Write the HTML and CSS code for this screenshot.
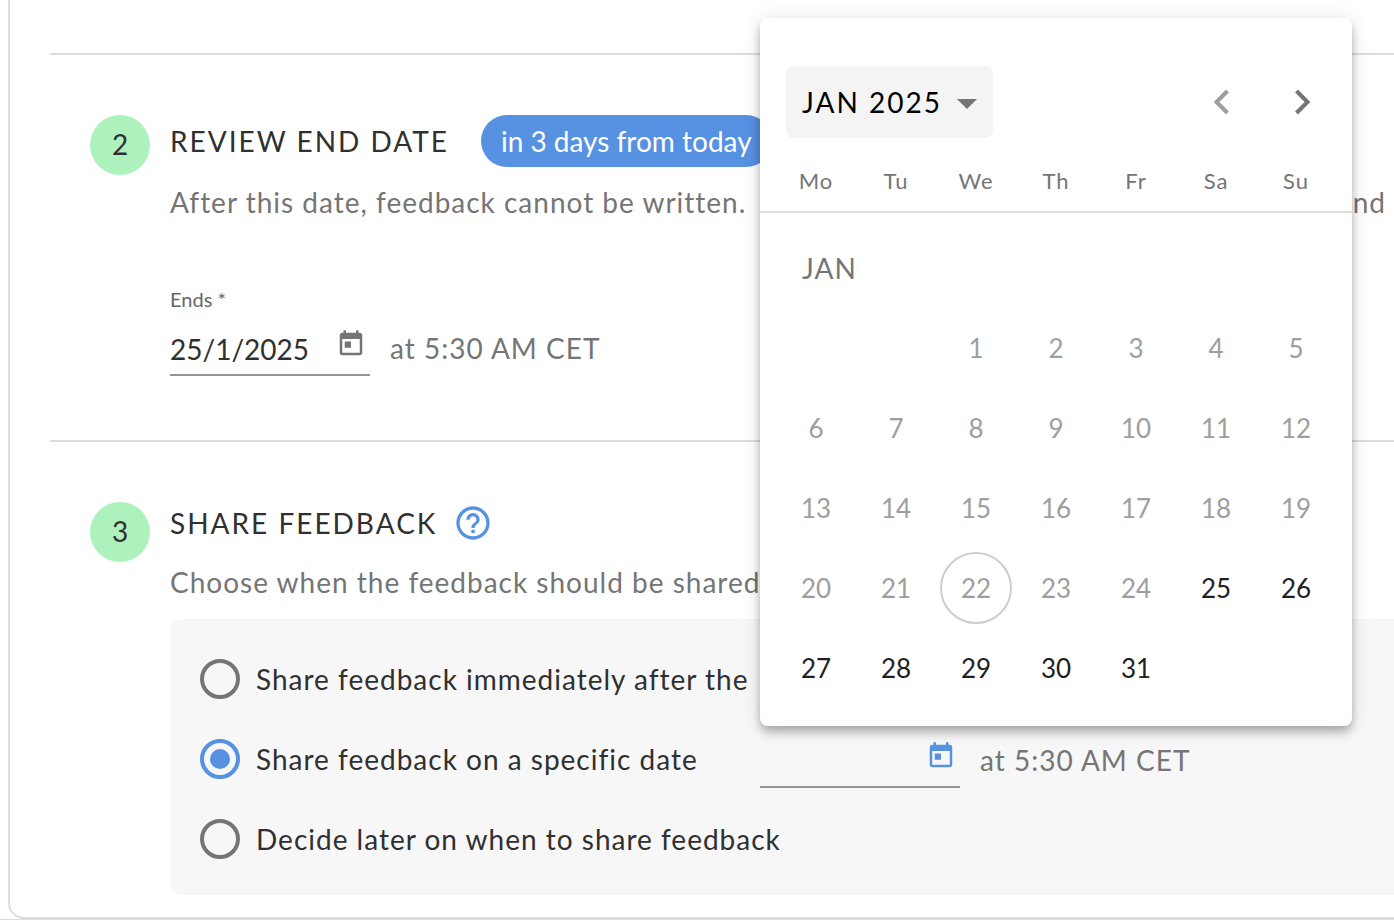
FILE: index.html
```html
<!DOCTYPE html>
<html lang="en">
<head>
    <meta charset="UTF-8">
    <meta name="viewport" content="width=device-width, initial-scale=1.0">
    <title>Review settings</title>
    <link rel="stylesheet" href="styles.css">
</head>
<body>
    <main class="page">
        <div class="card">
            <div class="step-previous"></div>

            <section class="step">
                <div class="step-number">2</div>
                <div class="step-content">
                    <div class="step-header">
                        <h2>REVIEW END DATE</h2>
                        <span class="chip">in 3 days from today</span>
                    </div>
                    <p class="description">
                        <span>After this date, feedback cannot be written.</span>
                        <span>nd</span>
                    </p>
                    <label class="field-label" for="end-date">Ends *</label>
                    <div class="date-row">
                        <div class="date-field">
                            <input type="text" id="end-date" value="25/1/2025">
                            <button class="icon-btn" aria-label="Open calendar">
                                <svg width="30" height="30" viewBox="0 0 24 24" fill="currentColor"><path d="M19 3h-1V1h-2v2H8V1H6v2H5c-1.11 0-1.99.9-1.99 2L3 19c0 1.1.89 2 2 2h14c1.1 0 2-.9 2-2V5c0-1.1-.9-2-2-2zm0 16H5V8h14v11zM7 10h5v5H7z"/></svg>
                            </button>
                        </div>
                        <span class="time">at 5:30 AM CET</span>
                    </div>
                </div>
            </section>

            <section class="step">
                <div class="step-number">3</div>
                <div class="step-content">
                    <div class="step-header share-header">
                        <h2>SHARE FEEDBACK</h2>
                        <button class="help-btn" aria-label="Help">
                            <svg width="40" height="40" viewBox="0 0 24 24" fill="currentColor"><path d="M11 18h2v-2h-2v2zm1-16C6.48 2 2 6.48 2 12s4.48 10 10 10 10-4.48 10-10S17.52 2 12 2zm0 18c-4.41 0-8-3.59-8-8s3.59-8 8-8 8 3.59 8 8-3.59 8-8 8zm0-14c-2.21 0-4 1.79-4 4h2c0-1.1.9-2 2-2s2 .9 2 2c0 2-3 1.75-3 5h2c0-2.25 3-2.5 3-5 0-2.21-1.79-4-4-4z"/></svg>
                        </button>
                    </div>
                    <p class="description">Choose when the feedback should be shared</p>

                    <div class="options">
                        <div class="option">
                            <label><input type="radio" name="share">Share feedback immediately after the</label>
                        </div>
                        <div class="option">
                            <label><input type="radio" name="share" checked>Share feedback on a specific date</label>
                            <div class="date-row">
                                <div class="date-field">
                                    <input type="text" id="share-date" aria-label="Share date">
                                    <button class="icon-btn active" aria-label="Open calendar">
                                        <svg width="30" height="30" viewBox="0 0 24 24" fill="currentColor"><path d="M19 3h-1V1h-2v2H8V1H6v2H5c-1.11 0-1.99.9-1.99 2L3 19c0 1.1.89 2 2 2h14c1.1 0 2-.9 2-2V5c0-1.1-.9-2-2-2zm0 16H5V8h14v11zM7 10h5v5H7z"/></svg>
                                    </button>

                                    <!-- Calendar opens above the field -->
                                    <div class="calendar">
                                        <div class="calendar-header">
                                            <button class="month-btn">
                                                JAN 2025
                                                <svg width="20" height="14" viewBox="0 0 20 14"><path d="M0 4h20L10 14z" fill="#757575"/></svg>
                                            </button>
                                            <div class="calendar-nav">
                                                <button class="nav-btn" aria-label="Previous month" disabled>
                                                    <svg width="24" height="32" viewBox="0 0 24 32"><path d="M17.5 5L6.5 16l11 11"/></svg>
                                                </button>
                                                <button class="nav-btn" aria-label="Next month">
                                                    <svg width="24" height="32" viewBox="0 0 24 32"><path d="M6.5 5l11 11-11 11"/></svg>
                                                </button>
                                            </div>
                                        </div>
                                        <table>
                                            <thead>
                                                <tr><th>Mo</th><th>Tu</th><th>We</th><th>Th</th><th>Fr</th><th>Sa</th><th>Su</th></tr>
                                            </thead>
                                            <tbody>
                                                <tr><td class="month-label" colspan="7">JAN</td></tr>
                                                <tr>
                                                    <td colspan="2"></td>
                                                    <td><button disabled>1</button></td>
                                                    <td><button disabled>2</button></td>
                                                    <td><button disabled>3</button></td>
                                                    <td><button disabled>4</button></td>
                                                    <td><button disabled>5</button></td>
                                                </tr>
                                                <tr>
                                                    <td><button disabled>6</button></td>
                                                    <td><button disabled>7</button></td>
                                                    <td><button disabled>8</button></td>
                                                    <td><button disabled>9</button></td>
                                                    <td><button disabled>10</button></td>
                                                    <td><button disabled>11</button></td>
                                                    <td><button disabled>12</button></td>
                                                </tr>
                                                <tr>
                                                    <td><button disabled>13</button></td>
                                                    <td><button disabled>14</button></td>
                                                    <td><button disabled>15</button></td>
                                                    <td><button disabled>16</button></td>
                                                    <td><button disabled>17</button></td>
                                                    <td><button disabled>18</button></td>
                                                    <td><button disabled>19</button></td>
                                                </tr>
                                                <tr>
                                                    <td><button disabled>20</button></td>
                                                    <td><button disabled>21</button></td>
                                                    <td><button class="today" disabled>22</button></td>
                                                    <td><button disabled>23</button></td>
                                                    <td><button disabled>24</button></td>
                                                    <td><button>25</button></td>
                                                    <td><button>26</button></td>
                                                </tr>
                                                <tr>
                                                    <td><button>27</button></td>
                                                    <td><button>28</button></td>
                                                    <td><button>29</button></td>
                                                    <td><button>30</button></td>
                                                    <td><button>31</button></td>
                                                    <td colspan="2"></td>
                                                </tr>
                                            </tbody>
                                        </table>
                                    </div>
                                </div>
                                <span class="time">at 5:30 AM CET</span>
                            </div>
                        </div>
                        <div class="option">
                            <label><input type="radio" name="share">Decide later on when to share feedback</label>
                        </div>
                    </div>
                </div>
            </section>
        </div>
    </main>
</body>
</html>
```
FILE: styles.css
```css
* {
    box-sizing: border-box;
}

body {
    margin: 0;
    background-color: #fff;
    color: #303030;
    font-family: Lato, "Liberation Sans", sans-serif;
    font-size: 28px;
    line-height: 36px;
    overflow: hidden;
}

button,
input {
    font: inherit;
    color: inherit;
}

button {
    display: flex;
    align-items: center;
    justify-content: center;
    padding: 0;
    border: none;
    background: none;
    cursor: pointer;
}

.page {
    padding-left: 8px;
    border-bottom: 1px solid #ddd;
}

/* The card runs past the right edge of the window */
.card {
    margin-right: -60px;
    padding: 0 40px 22px;
    border: 2px solid #ddd;
    border-top: none;
    border-radius: 0 0 16px 16px;
}

.step-previous {
    height: 53px;
}

.step {
    display: flex;
    gap: 20px;
    margin-right: -40px;
    padding: 60px 40px 64px;
    border-top: 2px solid #ddd;
}

.step:last-child {
    padding-bottom: 0;
}

.step-number {
    flex: none;
    width: 60px;
    height: 60px;
    border-radius: 50%;
    background-color: #adf2bd;
    line-height: 58px;
    text-align: center;
}

.step-content {
    flex: 1;
    min-width: 0;
}

.step-header {
    display: flex;
    align-items: center;
    gap: 32px;
    height: 52px;
}

.share-header {
    gap: 16px;
    height: 42px;
}

h2 {
    margin: 0;
    font-size: 28px;
    font-weight: 400;
    letter-spacing: 2px;
}

.chip {
    padding: 8px 20px;
    border-radius: 26px;
    background-color: #5791e2;
    color: #fff;
    white-space: nowrap;
}

.help-btn {
    color: #5791e2;
}

.description {
    display: flex;
    justify-content: space-between;
    margin: 17px 26px 0 0;
    color: #757575;
    letter-spacing: 1px;
    white-space: nowrap;
}

.share-header + .description {
    margin-top: 20px;
}

.field-label {
    display: block;
    margin-top: 67px;
    margin-bottom: 3px;
    color: #666;
    font-size: 20px;
    line-height: 24px;
}

.date-row {
    display: flex;
    align-items: center;
    gap: 20px;
}

.date-field {
    position: relative;
    display: flex;
    align-items: center;
    width: 200px;
    height: 62px;
    padding-right: 4px;
    border-bottom: 2px solid #949494;
}

.date-field input {
    flex: 1;
    min-width: 0;
    padding: 9px 0 0;
    border: none;
    outline: none;
    background: none;
}

.icon-btn {
    color: #757575;
}

.icon-btn.active {
    color: #5791e2;
}

.time {
    padding-top: 6px;
    color: #757575;
    letter-spacing: 1px;
}

.options {
    margin-top: 19px;
    padding: 20px 30px 16px;
    border-radius: 12px;
    background-color: #f7f7f7;
}

.option {
    display: flex;
    align-items: center;
    height: 80px;
}

.option label {
    display: flex;
    align-items: center;
    gap: 16px;
    width: 560px;
    letter-spacing: 1px;
    white-space: nowrap;
}

.option label:only-child {
    width: auto;
}

.option .date-row {
    margin-bottom: 4px;
}

input[type="radio"] {
    appearance: none;
    display: grid;
    place-items: center;
    width: 40px;
    height: 40px;
    margin: 0;
    border: 4px solid #757575;
    border-radius: 50%;
}

input[type="radio"]:checked {
    border-color: #5791e2;
}

input[type="radio"]:checked::before {
    content: "";
    width: 20px;
    height: 20px;
    border-radius: 50%;
    background-color: #5791e2;
}

/* Calendar */
.calendar {
    position: absolute;
    bottom: 100%;
    left: 0;
    z-index: 10;
    width: 592px;
    padding: 48px 0 18px;
    border-radius: 8px;
    background-color: #fff;
    box-shadow: 0 4px 8px -2px rgba(0, 0, 0, 0.2), 0 8px 10px rgba(0, 0, 0, 0.14), 0 2px 20px rgba(0, 0, 0, 0.12);
}

.calendar-header {
    display: flex;
    justify-content: space-between;
    padding: 0 10px 0 26px;
}

.month-btn {
    gap: 15px;
    height: 72px;
    padding: 0 16px;
    border-radius: 8px;
    background-color: #f4f4f4;
    color: #000;
    letter-spacing: 2px;
}

.calendar-nav {
    display: flex;
}

.nav-btn {
    width: 80px;
    height: 72px;
}

.nav-btn path {
    fill: none;
    stroke: #757575;
    stroke-width: 4;
}

.nav-btn:disabled path {
    stroke: #9e9e9e;
}

.calendar table {
    width: 100%;
    border-collapse: collapse;
    table-layout: fixed;
}

.calendar thead,
.calendar tbody {
    display: block;
    padding: 0 16px;
}

.calendar tbody {
    padding-top: 15px;
}

.calendar thead {
    border-bottom: 2px solid #ddd;
}

.calendar tr {
    display: grid;
    grid-template-columns: repeat(7, 1fr);
}

.calendar th {
    padding: 25px 0 12px;
    color: #757575;
    font-size: 22px;
    font-weight: 400;
    letter-spacing: 1px;
}

.calendar td {
    display: grid;
    place-items: center;
    height: 80px;
    padding: 0;
}

.calendar td[colspan="2"] {
    grid-column: span 2;
}

.calendar .month-label {
    grid-column: span 7;
    justify-items: start;
    padding-left: 26px;
    color: #757575;
    letter-spacing: 1px;
}

.calendar td button {
    width: 72px;
    height: 72px;
    border-radius: 50%;
    color: #212121;
    font-size: 26px;
}

.calendar td button:disabled {
    color: #9e9e9e;
}

.calendar td .today {
    border: 2px solid #ccc;
}
```
